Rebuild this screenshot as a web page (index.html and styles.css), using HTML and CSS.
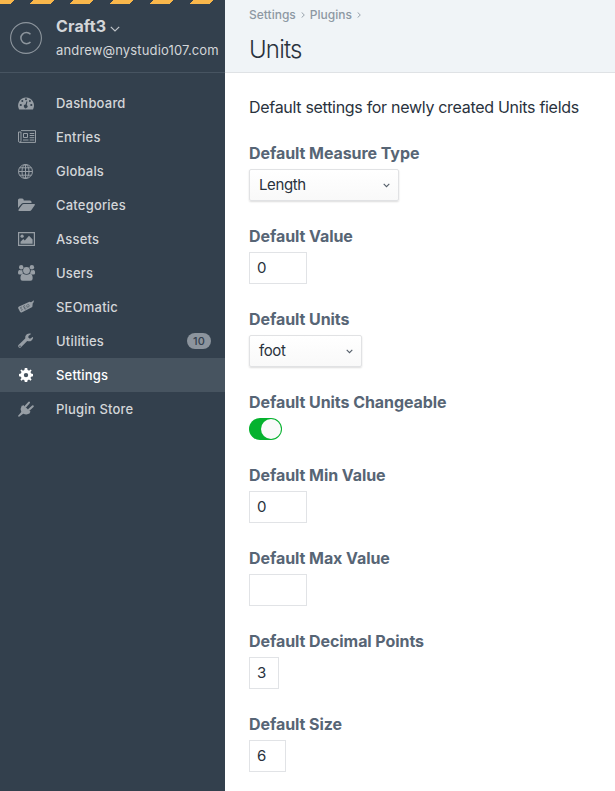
FILE: index.html
```html
<!DOCTYPE html>
<html lang="en">
<head>
<meta charset="utf-8">
<title>Units</title>
<link rel="stylesheet" href="styles.css">
</head>
<body>
<div class="app">
<aside class="sidebar">
  <div class="stripes"></div>
  <header class="system">
    <svg class="system-icon" viewBox="0 0 32 32"><circle cx="16" cy="16" r="15.4"/><path class="c" d="M20.5 12.2A5.6 5.6 0 1 0 20.5 20"/></svg>
    <div class="system-info">
      <div class="system-name"><span>Craft3</span><svg class="chev" viewBox="0 0 10 6"><path d="M.8 .8L5 5L9.200 .8"/></svg></div>
      <div class="system-user"><span>andrew@nystudio107.com</span></div>
    </div>
  </header>
  <nav class="nav">
    <a class="item"><svg class="ico" viewBox="0 0 18 18"><path fill-rule="evenodd" d="M1 15.300A8 8 0 1 1 15.100 15.300Q14.900 15.500 14.500 15.500H1.600Q1.200 15.500 1 15.300ZM1.700 11a1.100 1.100 0 1 0 2.200 0a1.100 1.100 0 1 0-2.200 0M3.300 7a1 1 0 1 0 2 0a1 1 0 1 0-2 0M7 5.200a1 1 0 1 0 2 0a1 1 0 1 0-2 0M10.900 7a1 1 0 1 0 2 0a1 1 0 1 0-2 0M12.200 11a1.100 1.100 0 1 0 2.200 0a1.100 1.100 0 1 0-2.200 0M8.500 7.200L7.500 10.600A1.800 1.800 0 1 0 8.700 10.900L9.400 7.400Z"/></svg><span class="text">Dashboard</span></a>
    <a class="item"><svg class="ico wide" viewBox="0 0 19 18"><g class="line"><path d="M3 2.600H17.500V14.400H1.900Q.5 14.400 .5 12.900V4H3V12.500Q3 14.400 1.900 14.400"/><path d="M5.500 5.500H9.500V9.500H5.500ZM5 12H10.500M11.700 5.500H16.300M11.700 7.500H16.300M11.700 9.700H16.300M11.700 12H16.300"/></g></svg><span class="text">Entries</span></a>
    <a class="item"><svg class="ico" viewBox="0 0 18 18"><g class="line"><circle cx="7.500" cy="9.500" r="7"/><ellipse cx="7.500" cy="9.500" rx="3.500" ry="7"/><path d="M7.500 2.500V16.500M.5 9.500H14.500M1.600 5.800H13.400M1.600 13.200H13.400"/></g></svg><span class="text">Globals</span></a>
    <a class="item"><svg class="ico" viewBox="0 0 18 18"><g transform="translate(0 .5)"><path d="M0 11.600V3.500Q0 2 1.500 2H4.200Q5.700 2 5.700 3.500V4H12Q13.500 4 13.500 5.500V6.500H5.500Q4.200 6.500 3.300 7.600Z"/><path d="M.5 13.300L4 8.500Q4.700 7.600 5.800 7.600H16.200Q17.500 7.600 16.700 8.700L13.600 13.200Q12.800 14.400 11.600 14.400H1Q0 14.400 .5 13.300Z"/></g></svg><span class="text">Categories</span></a>
    <a class="item"><svg class="ico" viewBox="0 0 18 18"><path class="frame" d="M.6 2.600H16.400V15.400H.6Z"/><circle cx="4.100" cy="6.200" r="1.600"/><path d="M2.500 13.700V11.700L5.300 9L6.800 10.400L11 5.800L14.600 9.600V13.700Z"/></svg><span class="text">Assets</span></a>
    <a class="item"><svg class="ico" viewBox="0 0 18 18"><circle cx="3.200" cy="3.200" r="2.200"/><circle cx="13.900" cy="3.200" r="2.200"/><circle cx="8.500" cy="6.500" r="3.400"/><path d="M0 8.900Q0 5.900 1.700 5.900Q3 6.600 4.300 6.100Q4.200 8.200 5.300 9.400Q3.900 9.500 3.100 10.500H1.500Q0 10.500 0 8.900ZM17.100 8.900Q17.100 5.900 15.400 5.900Q14.100 6.600 12.800 6.100Q12.900 8.200 11.800 9.400Q13.200 9.500 14 10.500H15.600Q17.100 10.500 17.100 8.900ZM2.400 14.300Q2.400 9.900 5.200 9.700Q8.500 11.900 11.900 9.700Q14.700 9.900 14.700 14.300Q14.700 16.800 12.500 16.800H4.600Q2.400 16.800 2.400 14.300Z"/></svg><span class="text">Users</span></a>
    <a class="item"><svg class="ico" viewBox="0 0 18 18"><path d="M1 8.600L11.500 3.700L13 4.200L16 2.200L15.500 4.400L14.800 5.100L14.300 9L3.600 14.400Q2.600 14.800 2 13.700L.2 10.300Q-.2 9.200 1 8.600Z"/><path class="cut" d="M3.900 9L2.200 9.900L4.400 11.600L3.200 12.600M5.500 8.200L6.900 11.200M5.500 8.200L7 7.500M6.200 9.600L7.400 9M6.900 11.200L8.300 10.500M9.700 6.500Q8 7.300 9.100 9.200Q11.100 9.500 11.200 7.700Q10.900 6.300 9.700 6.500"/></svg><span class="text">SEOmatic</span></a>
    <a class="item"><svg class="ico" viewBox="0 0 18 18"><path fill-rule="evenodd" d="M.5 13L7.200 6.600Q6.800 3.700 8.800 2.300Q10.500 1.100 12.500 1.600L13 2.100L10.400 3.900V5.700L12 6.700L14.700 5.100Q15.300 5.200 15 6.200Q14 9.700 10.200 9.300L9.200 9L3 15.300Q1.800 16.400 .7 15.300Q-.5 14.100 .5 13ZM1.300 14.200a.7.7 0 1 0 1.400 0a.7.7 0 1 0-1.400 0"/></svg><span class="text">Utilities</span><span class="badge">10</span></a>
    <a class="item sel"><svg class="ico" viewBox="0 0 18 18"><g transform="translate(8 9.100)"><path fill-rule="evenodd" d="M-1.200-7H1.200L1.600-5Q2.400-4.800 3-4.400L4.600-5.500L5.600-4.500L4.500-3L5.100-1.600L7-1.200V1.200L5.100 1.600L4.500 3L5.600 4.500L4.500 5.600L3 4.500L1.600 5.100L1.200 7H-1.200L-1.600 5.100L-3 4.500L-4.500 5.600L-5.600 4.500L-4.500 3L-5.100 1.600L-7 1.200V-1.200L-5.100-1.600L-4.500-3L-5.600-4.500L-4.600-5.500L-3-4.400L-1.600-5ZM-2.200 0a2.200 2.200 0 1 0 4.400 0a2.200 2.200 0 1 0-4.400 0"/></g></svg><span class="text">Settings</span></a>
    <a class="item"><svg class="ico" viewBox="0 0 18 18"><path d="M3.900 5.400L12 13.100Q8.800 15.600 5.300 13.700L4.100 14.500L1.500 16.500Q.2 17 .1 15.700L2.900 12.500L3.300 11.700Q1.800 8.500 3.900 5.400Z"/><path class="prong" d="M7.500 6.500L11 2.600M11 9.800L14.800 6.200"/><path d="M5.200 5L12.500 11.800L11 13.500L3.700 6.500Z"/></svg><span class="text">Plugin Store</span></a>
  </nav>
</aside>
<main class="main">
  <header class="page-head">
    <div class="crumbs"><span class="crumb a">Settings</span><svg viewBox="0 0 4 6"><path d="M.6 .4L3.300 3L.6 5.600"/></svg><span class="crumb b">Plugins</span><svg viewBox="0 0 4 6"><path d="M.6 .4L3.300 3L.6 5.600"/></svg></div>
    <h1><span>Units</span></h1>
  </header>
  <div class="content">
    <p class="intro"><span>Default settings for newly created Units fields</span></p>
    <div class="field"><label>Default Measure Type</label><div class="select w150"><span>Length</span><svg viewBox="0 0 7 5"><path d="M.7 .8L3.500 3.600L6.300 .8"/></svg></div></div>
    <div class="field"><label>Default Value</label><div class="input w58">0</div></div>
    <div class="field"><label>Default Units</label><div class="select w113"><span>foot</span><svg viewBox="0 0 7 5"><path d="M.7 .8L3.500 3.600L6.300 .8"/></svg></div></div>
    <div class="field"><label>Default Units Changeable</label><div class="switch"><div class="knob"></div></div></div>
    <div class="field"><label>Default Min Value</label><div class="input w58">0</div></div>
    <div class="field"><label>Default Max Value</label><div class="input w58"></div></div>
    <div class="field"><label>Default Decimal Points</label><div class="input w30">3</div></div>
    <div class="field"><label>Default Size</label><div class="input w37">6</div></div>
  </div>
</main>
</div>
</body>
</html>
```
FILE: styles.css
```css
* { box-sizing: border-box; }
body { margin: 0; font-family: Inter, "Liberation Sans", sans-serif; font-size: 15px; color: #29323d; background: #fff; }
.app { display: flex; height: 791px; overflow: hidden; }

.sidebar { width: 225px; flex: none; background: #33404d; color: #d3d6d9; }
.stripes { height: 4px; background: repeating-linear-gradient(135deg, #f9b74b 0, #f9b74b 9.9px, #33404d 9.9px, #33404d 24.04px, #f9b74b 24.04px, #f9b74b 28.284px); }
.system { display: flex; height: 69px; padding: 12px 0 0 10px; gap: 14px; border-bottom: 1px solid #475461; }
.system-icon { width: 32px; height: 32px; margin-top: 6px; fill: none; stroke: #8d959d; stroke-width: 1.1; }
.system-icon .c { stroke-width: 1.5; }
.system-name { display: flex; align-items: center; gap: 4px; height: 20px; font-size: 16px; font-weight: 700; letter-spacing: .15px; }
.chev { width: 10px; height: 6px; margin-top: 5px; fill: none; stroke: #c0c4c9; stroke-width: 1.2; }
.system-user { height: 24px; line-height: 28px; font-size: 13px; letter-spacing: .15px; white-space: nowrap; }

.nav { padding-top: 13px; }
.item { display: flex; align-items: center; height: 34px; padding: 0 14px 0 18px; font-size: 13px; font-weight: 500; letter-spacing: .2px; }
.ico { width: 18px; height: 18px; margin-right: 20px; fill: #979ea5; overflow: visible; }
.ico.wide { width: 19px; margin-right: 19px; }
.line, .frame { fill: none; stroke: #979ea5; stroke-width: 1; }
.frame { stroke-width: 1.2; }
.cut { fill: none; stroke: #4b5762; stroke-width: .7; }
.prong { fill: none; stroke: #979ea5; stroke-width: 2; stroke-linecap: round; }
.sel { background: #475460; color: #fff; }
.sel .ico { fill: #fff; }
.badge { margin-left: auto; width: 24px; height: 16px; border-radius: 8px; background: #8c949d; color: #33404d; font-size: 11px; line-height: 16px; text-align: center; letter-spacing: .2px; }

.main { flex: 1; min-width: 0; }
.page-head { height: 73px; padding: 5px 24px 0; background: #f0f4f7; border-bottom: 1px solid #dfe2e5; }
.crumbs { display: flex; align-items: center; gap: 5px; height: 19px; font-size: 12px; font-weight: 500; color: #8d98a3; }
.crumbs svg { width: 4px; height: 6px; margin-top: 1px; fill: none; stroke: #8d98a3; stroke-width: .9; }
h1 { margin: 10px 0 0; font-size: 24px; line-height: 32px; font-weight: 300; letter-spacing: -.8px; }
.content { padding: 23px 24px 0; }
.intro { margin: 0 0 24px; line-height: 22px; font-size: 16px; letter-spacing: -.3px; white-space: nowrap; }
.field { margin-bottom: 24px; }
.field label { display: block; height: 22px; margin-bottom: 5px; font-size: 16px; line-height: 22px; font-weight: 700; letter-spacing: -.07px; color: #576575; }
.input { height: 32px; padding: 0 7px; border: 1px solid #e1e3e6; font-size: 15px; line-height: 30px; letter-spacing: -.3px; }
.select { display: flex; align-items: center; justify-content: space-between; height: 32px; padding: 0 8px 0 9px; border: 1px solid #e1e2e4; border-radius: 2px; background: linear-gradient(#fff, #f9f9f9); box-shadow: 0 1px 2px rgba(0, 0, 0, .14); font-size: 15px; line-height: 30px; letter-spacing: -.4px; }
.select svg { width: 7px; height: 5px; fill: none; stroke: #555f6a; stroke-width: 1.1; }
.w150 { width: 150px; }
.w113 { width: 113px; }
.w58 { width: 58px; }
.w37 { width: 37px; }
.w30 { width: 30px; }
.switch { display: flex; justify-content: flex-end; width: 33px; height: 22px; padding: 1px; border-radius: 11px; background: #05b22e; }
.knob { width: 20px; height: 20px; border-radius: 50%; background: #fafafa; }
```
